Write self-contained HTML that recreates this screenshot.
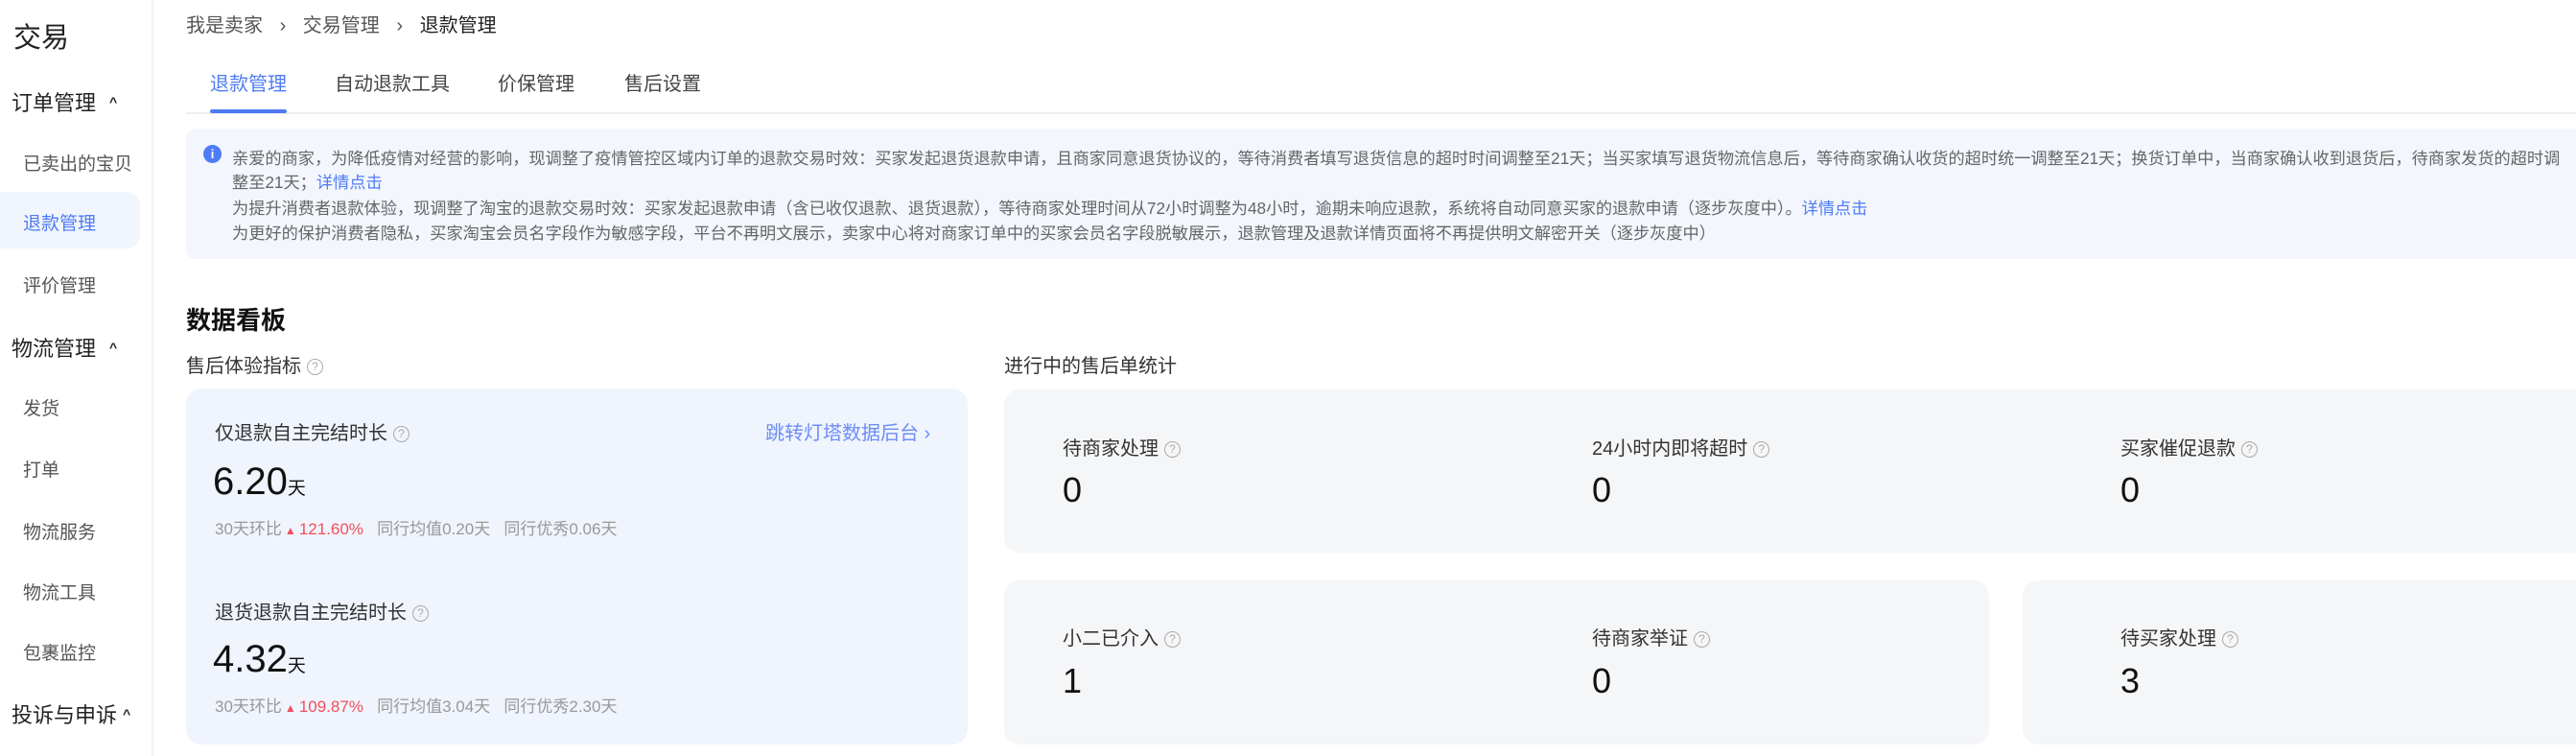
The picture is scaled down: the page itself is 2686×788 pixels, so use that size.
<!DOCTYPE html>
<html><head><meta charset="utf-8"><style>
*{margin:0;padding:0;box-sizing:border-box}
body{width:2686px;height:788px;overflow:hidden;background:#fff;font-family:"Liberation Sans","Noto Sans CJK SC",sans-serif;color:#333;position:relative}
.a{position:absolute;white-space:nowrap}
.side{position:absolute;left:0;top:0;width:160px;height:788px;border-right:2px solid #f2f3f5}
.g1{font-size:22px;color:#222}
.g2{font-size:19px;color:#555}
.caret{display:inline-block;font-size:14px;margin-left:14px;vertical-align:4px;font-weight:bold}
.q{display:inline-block;width:17px;height:17px;border:1.5px solid #aaa;border-radius:50%;font-size:12px;line-height:14px;text-align:center;color:#aaa;vertical-align:2px;margin-left:6px}
.card{position:absolute;border-radius:16px}
.lbl{font-size:20px;color:#333}
.val{font-size:36px;color:#111}
.sub{font-size:17px;color:#999}
.red{color:#f0505a}
.blue{color:#4f7cf4}
.notice div{position:absolute;left:242px;font-size:17.2px;color:#666;white-space:nowrap}
</style></head><body>
<div class="side">
<div class="a" style="left:14px;top:16px;font-size:29px;color:#222">交易</div>
<div class="a g1" style="left:12px;top:90px">订单管理<span class="caret">^</span></div>
<div class="a g2" style="left:24px;top:156px">已卖出的宝贝</div>
<div class="a" style="left:0;top:200px;width:146px;height:59px;background:#f1f5fd;border-radius:0 14px 14px 0"></div>
<div class="a g2" style="left:24px;top:218px;color:#4f7cf4">退款管理</div>
<div class="a g2" style="left:24px;top:283px">评价管理</div>
<div class="a g1" style="left:12px;top:346px">物流管理<span class="caret">^</span></div>
<div class="a g2" style="left:24px;top:411px">发货</div>
<div class="a g2" style="left:24px;top:475px">打单</div>
<div class="a g2" style="left:24px;top:540px">物流服务</div>
<div class="a g2" style="left:24px;top:603px">物流工具</div>
<div class="a g2" style="left:24px;top:666px">包裹监控</div>
<div class="a g1" style="left:12px;top:728px">投诉与申诉<span class="caret" style="margin-left:6px">^</span></div>
</div>

<div class="a" style="left:194px;top:10px;font-size:20px;color:#555">我是卖家 <span style="margin:0 12px">›</span> 交易管理 <span style="margin:0 12px">›</span> <span style="color:#222">退款管理</span></div>
<div class="a" style="left:219px;top:71px;font-size:20px;color:#4f7cf4">退款管理</div>
<div class="a" style="left:349px;top:71px;font-size:20px;color:#444">自动退款工具</div>
<div class="a" style="left:519px;top:71px;font-size:20px;color:#444">价保管理</div>
<div class="a" style="left:651px;top:71px;font-size:20px;color:#444">售后设置</div>
<div class="a" style="left:194px;top:117px;width:2492px;height:2px;background:#eceef2"></div>
<div class="a" style="left:219px;top:114px;width:80px;height:4px;background:#4f7cf4;border-radius:2px"></div>

<div class="notice">
<div style="left:194px;top:134px;width:2500px;height:136px;background:#f3f6fd;border-radius:10px"></div>
<span class="a" style="left:212px;top:151px;width:19px;height:19px;border-radius:50%;background:#4f7cf4;color:#fff;font-size:13px;line-height:19px;text-align:center;font-weight:bold">i</span>
<div style="top:151px">亲爱的商家，为降低疫情对经营的影响，现调整了疫情管控区域内订单的退款交易时效：买家发起退货退款申请，且商家同意退货协议的，等待消费者填写退货信息的超时时间调整至21天；当买家填写退货物流信息后，等待商家确认收货的超时统一调整至21天；换货订单中，当商家确认收到退货后，待商家发货的超时调</div>
<div style="top:176px">整至21天；<span class="blue">详情点击</span></div>
<div style="top:203px">为提升消费者退款体验，现调整了淘宝的退款交易时效：买家发起退款申请（含已收仅退款、退货退款），等待商家处理时间从72小时调整为48小时，逾期未响应退款，系统将自动同意买家的退款申请（逐步灰度中）。<span class="blue">详情点击</span></div>
<div style="top:229px">为更好的保护消费者隐私，买家淘宝会员名字段作为敏感字段，平台不再明文展示，卖家中心将对商家订单中的买家会员名字段脱敏展示，退款管理及退款详情页面将不再提供明文解密开关（逐步灰度中）</div>
</div>

<div class="a" style="left:194px;top:314px;font-size:26px;font-weight:bold;color:#111">数据看板</div>
<div class="a" style="left:194px;top:365px;font-size:20px">售后体验指标<span class="q">?</span></div>
<div class="a" style="left:1047px;top:365px;font-size:20px">进行中的售后单统计</div>

<div class="card" style="left:194px;top:405px;width:815px;height:371px;background:#f0f4fd"></div>
<div class="a lbl" style="left:224px;top:435px">仅退款自主完结时长<span class="q">?</span></div>
<div class="a" style="left:798px;top:435px;font-size:20px;color:#6c8df5">跳转灯塔数据后台 ›</div>
<div class="a" style="left:222px;top:480px;font-size:40px;color:#111">6.20<span style="font-size:19px">天</span></div>
<div class="a sub" style="left:224px;top:537px">30天环比<span class="red" style="font-size:12px;margin:0 3px">▲</span><span class="red">121.60%</span>&nbsp;&nbsp;&nbsp;同行均值0.20天&nbsp;&nbsp;&nbsp;同行优秀0.06天</div>
<div class="a lbl" style="left:224px;top:622px">退货退款自主完结时长<span class="q">?</span></div>
<div class="a" style="left:222px;top:665px;font-size:40px;color:#111">4.32<span style="font-size:19px">天</span></div>
<div class="a sub" style="left:224px;top:722px">30天环比<span class="red" style="font-size:12px;margin:0 3px">▲</span><span class="red">109.87%</span>&nbsp;&nbsp;&nbsp;同行均值3.04天&nbsp;&nbsp;&nbsp;同行优秀2.30天</div>

<div class="card" style="left:1047px;top:406px;width:1700px;height:170px;background:#f5f6f8"></div>
<div class="card" style="left:1047px;top:605px;width:1027px;height:171px;background:#f5f6f8"></div>
<div class="card" style="left:2109px;top:605px;width:640px;height:171px;background:#f5f6f8"></div>

<div class="a lbl" style="left:1108px;top:451px">待商家处理<span class="q">?</span></div>
<div class="a lbl" style="left:1660px;top:451px">24小时内即将超时<span class="q">?</span></div>
<div class="a lbl" style="left:2211px;top:451px">买家催促退款<span class="q">?</span></div>
<div class="a val" style="left:1108px;top:490px">0</div>
<div class="a val" style="left:1660px;top:490px">0</div>
<div class="a val" style="left:2211px;top:490px">0</div>

<div class="a lbl" style="left:1108px;top:649px">小二已介入<span class="q">?</span></div>
<div class="a lbl" style="left:1660px;top:649px">待商家举证<span class="q">?</span></div>
<div class="a lbl" style="left:2211px;top:649px">待买家处理<span class="q">?</span></div>
<div class="a val" style="left:1108px;top:689px">1</div>
<div class="a val" style="left:1660px;top:689px">0</div>
<div class="a val" style="left:2211px;top:689px">3</div>
</body></html>
